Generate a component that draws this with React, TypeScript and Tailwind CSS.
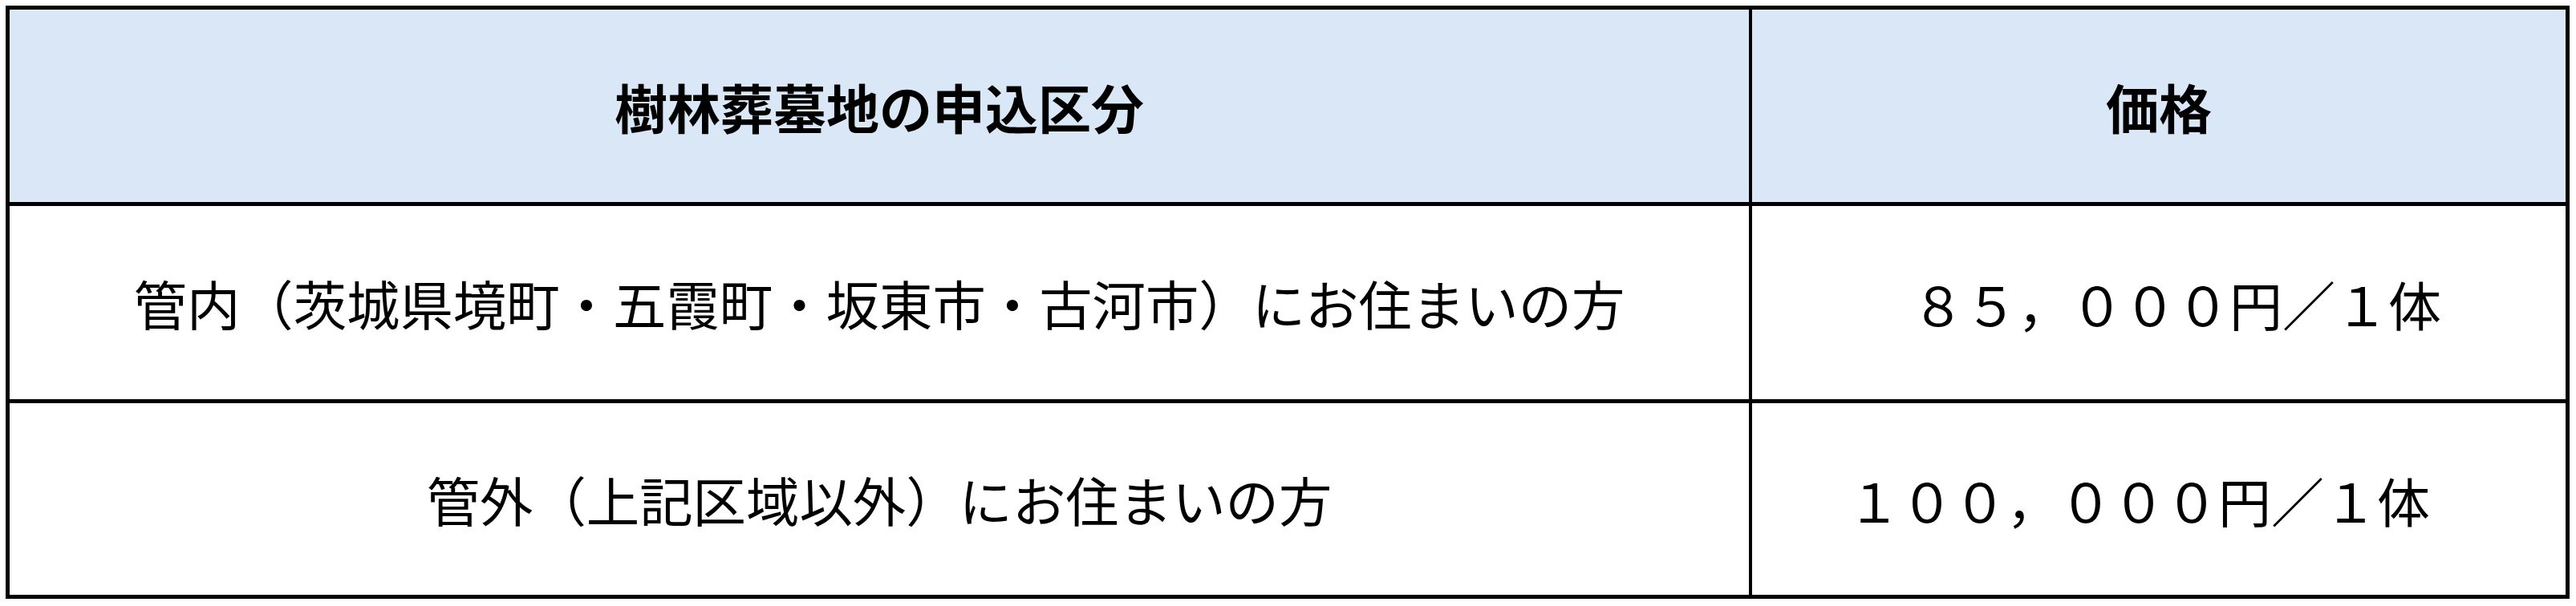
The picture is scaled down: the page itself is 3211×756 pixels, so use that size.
import React from "react";

const font = { fontFamily: '"Noto Sans CJK JP", "Noto Sans", sans-serif' };

export default function App() {
  return (
    <div className="w-[3211px] h-[756px] bg-white pt-[7px] pl-[7px]" style={font}>
      <div className="w-[3196px] h-[740px] border-[5px] border-black grid grid-cols-[2168px_4px_1014px] grid-rows-[240px_5px_241px_5px_239px] text-black">
        {/* header */}
        <div className="bg-[#dae7f7] flex items-center justify-center text-[66px] font-bold leading-none">
          樹林葬墓地の申込区分
        </div>
        <div className="bg-black" />
        <div className="bg-[#dae7f7] flex items-center justify-center text-[66px] font-bold leading-none">
          価格
        </div>
        <div className="bg-black col-span-3" />
        {/* row 1 */}
        <div className="flex items-center justify-center text-[66.4px] leading-none">
          管内（茨城県境町・五霞町・坂東市・古河市）にお住まいの方
        </div>
        <div className="bg-black" />
        <div className="flex items-center justify-center text-[66px] leading-none pl-[44px]">
          ８５，０００円／１体
        </div>
        <div className="bg-black col-span-3" />
        {/* row 2 */}
        <div className="flex items-center justify-center text-[66.4px] leading-none">
          管外（上記区域以外）にお住まいの方
        </div>
        <div className="bg-black" />
        <div className="flex items-center justify-center text-[66px] leading-none pr-[50px]">
          １００，０００円／１体
        </div>
      </div>
    </div>
  );
}
